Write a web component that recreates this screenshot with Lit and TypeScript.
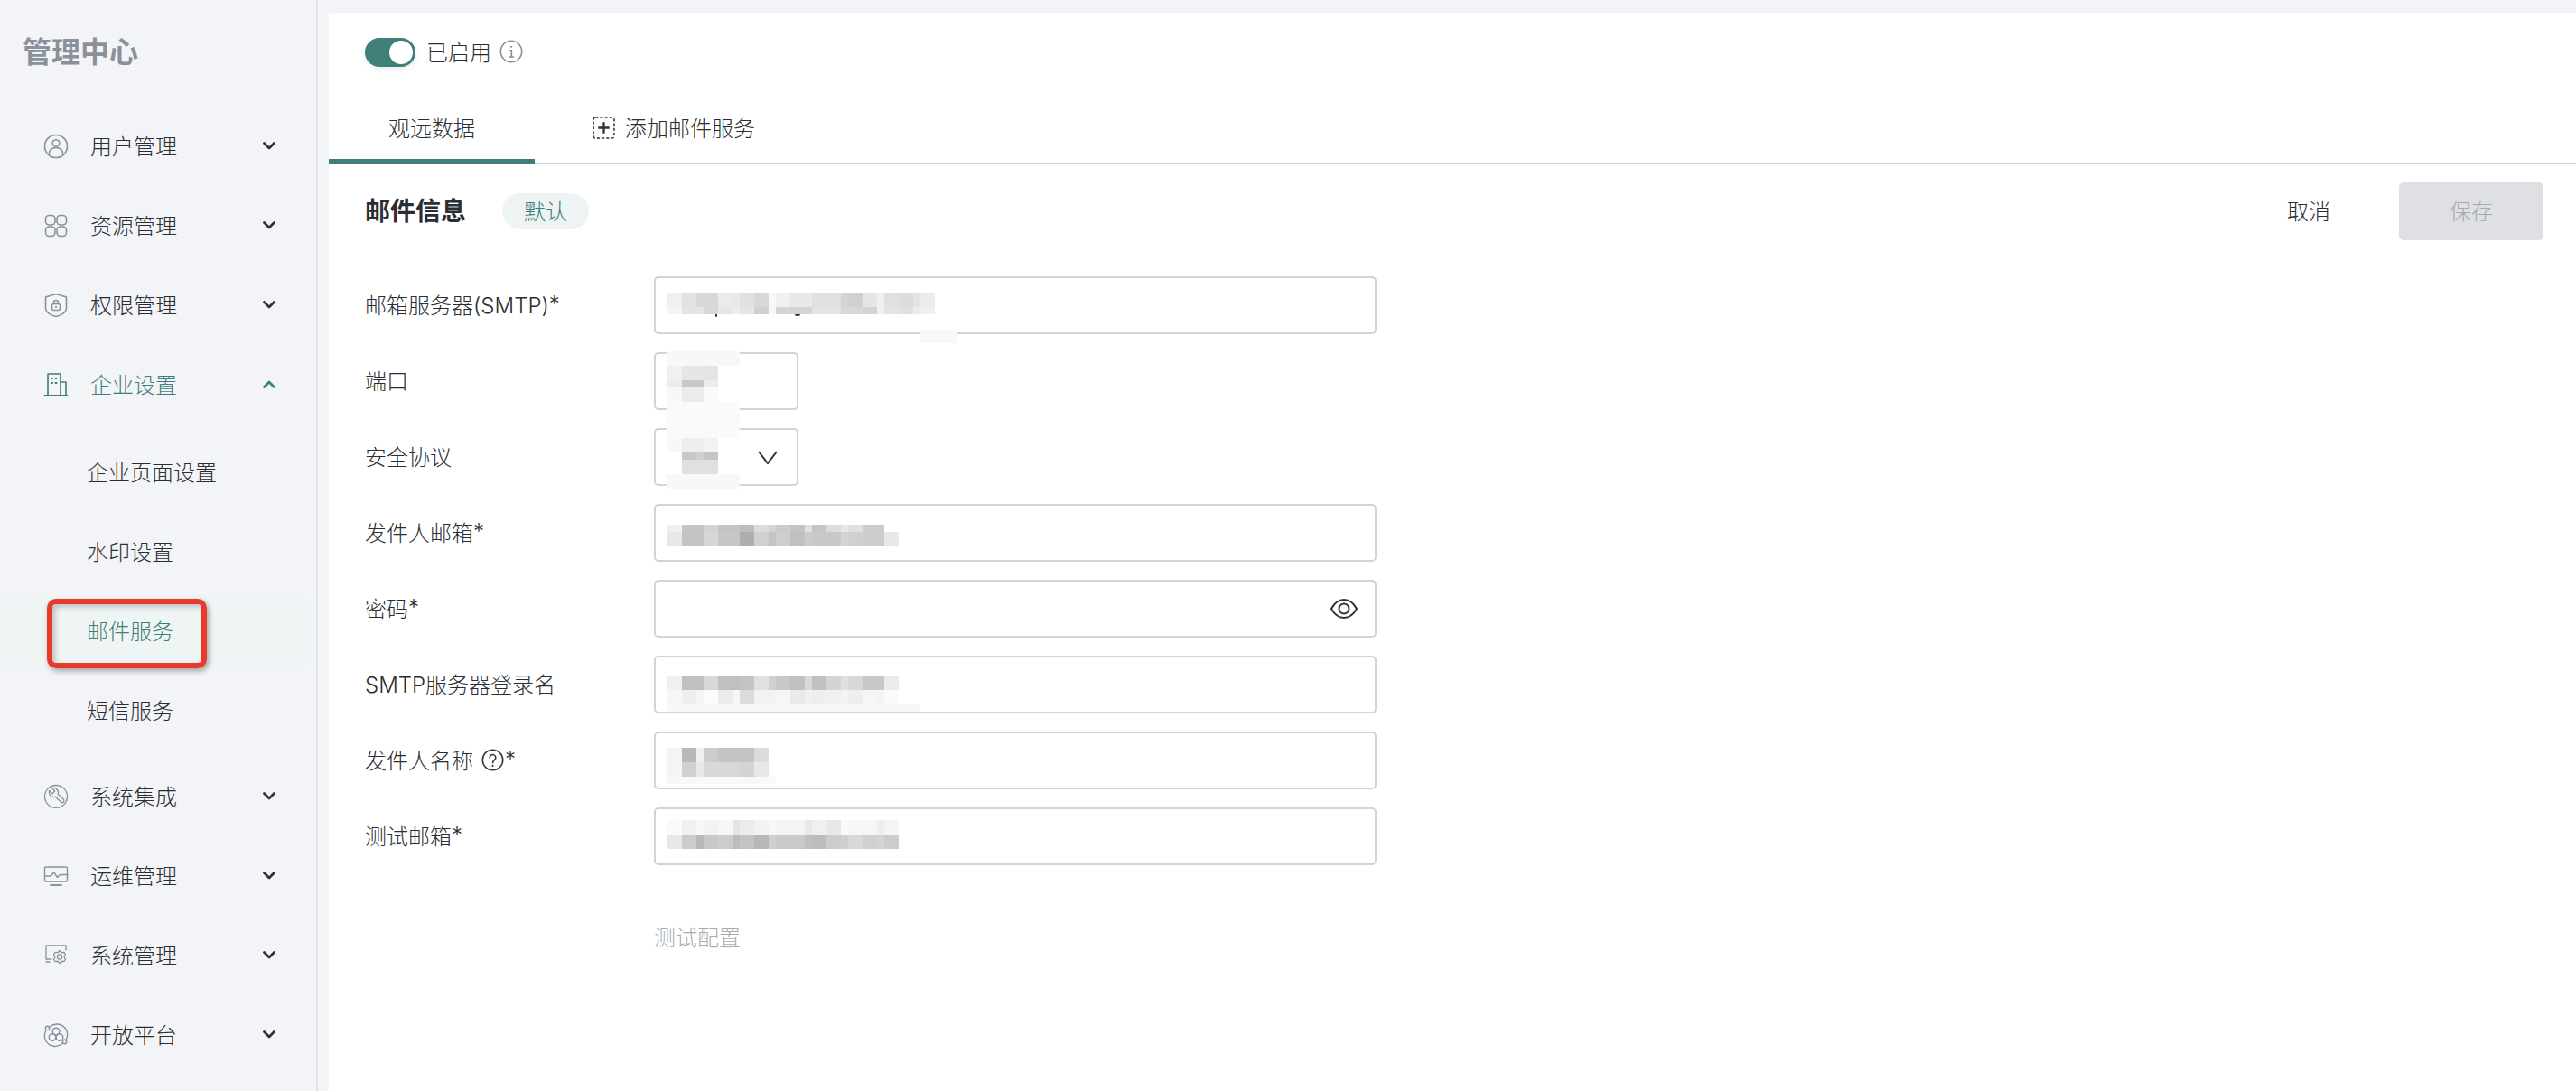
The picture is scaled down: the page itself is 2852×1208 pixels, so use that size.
import { LitElement, html, css, svg } from "lit";
import { customElement, property } from "lit/decorators.js";

type MosaicRow = [number, string];
interface Patch { left: number; top: number; rows: MosaicRow[]; ticks?: [number, number, number, number][]; }

@customElement("blur-mosaic")
class BlurMosaic extends LitElement {
  @property({ attribute: false }) patch!: Patch;
  static styles = css`
    :host { display: block; position: absolute; z-index: 1; pointer-events: none; }
    .grid { filter: blur(0.7px); }
    .row { display: flex; }
    .cell { flex: none; }
    .tick { position: absolute; background: #2f3338; border-radius: 0 0 4px 4px; }
  `;
  private cells(spec: string) {
    return spec.split(" ").map((part) => {
      const [g, n] = part.split("*");
      const width = Number(n ?? 1) * 8;
      const bg = g === "00" ? "transparent" : `#${g}${g}${g}`;
      return html`<div class="cell" style="width:${width}px;background:${bg}"></div>`;
    });
  }
  render() {
    return html`<div class="grid">${this.patch.rows.map(
      ([h, spec]) => html`<div class="row" style="height:${h}px">${this.cells(spec)}</div>`
    )}</div>${(this.patch.ticks ?? []).map(
      ([x, y, w, h]) => html`<div class="tick" style="left:${x}px;top:${y}px;width:${w}px;height:${h}px"></div>`
    )}`;
  }
}

const ic = (body: unknown, color = "#8b919b", width = 1.6) => html`<svg class="ic" viewBox="0 0 28 28" fill="none" stroke=${color} stroke-width=${width} stroke-linecap="round" stroke-linejoin="round">${body}</svg>`;

const ICONS: Record<string, unknown> = {
  user: ic(svg`<circle cx="14" cy="14" r="12.5"/><circle cx="14" cy="10.5" r="3.8"/><path d="M6 23c.6-4.800 3.600-7.500 8-7.500s7.400 2.700 8 7.500"/>`),
  res: ic(svg`<rect x="2.500" y="2.500" width="10.500" height="10.500" rx="4"/><rect x="15" y="2.500" width="10.500" height="10.500" rx="4"/><rect x="2.500" y="15" width="10.500" height="10.500" rx="4"/><rect x="15" y="15" width="10.500" height="10.500" rx="4"/>`),
  shield: ic(svg`<path d="M14 1.500l11.500 3.500v12c0 5-5.500 8-11.500 9.500-6-1.500-11.500-4.500-11.500-9.500V5z"/><rect x="9.500" y="12.500" width="9" height="7" rx="2"/><path d="M11.500 12.500v-1.500a2.500 2.500 0 0 1 5 0v1.500"/><path d="M14 15.500v1"/>`),
  building: ic(svg`<path d="M5 25V2h14v23"/><path d="M19 11h6v14"/><path d="M1.500 26h25" stroke-width="2"/><path d="M9 7h1M13.500 7h1M9 12h1M13.500 12h1" stroke-width="2"/>`, "#3f7f7a"),
  wrench: ic(svg`<circle cx="14" cy="14" r="12.500"/><path d="M6.500 7.500l3.500 3.200 2.700-2.700-3.200-3.500c3.500-.8 7 1.500 7 5 0 .8-.1 1.300-.3 1.800l5.800 5.500c1.200 1.200 1.200 2.500.4 3.300s-2.100.8-3.200-.3l-5.800-5.600c-.6.2-1.300.3-2 .3-3.500-.1-5.700-3.500-4.900-7z"/>`, "#8b919b", 1.3),
  monitor: ic(svg`<rect x="1.500" y="4" width="25" height="16" rx="1"/><path d="M1.500 14h7l3-4.500 4 6 3-3h8.500"/><path d="M8 24h12" stroke-width="1.800"/>`, "#8b919b", 1.4),
  gear: ic(svg`<path d="M25 8V3H3v15h6"/><path d="M3 21h4"/><path d="M18 8.500l2 2.200 3-.2 1.500 2.500-1.500 2.500 1.500 2.500-1.500 2.500-3-.2-2 2.200-2-2.200-3 .2-1.500-2.500 1.500-2.500-1.500-2.500 1.500-2.500 3 .2z"/><circle cx="18" cy="15.500" r="2.600"/>`, "#8b919b", 1.3),
  open: ic(svg`<path d="M7 5c3-2.500 6-3.300 9-3 4 .5 8 3 10 7.500 1 3 .8 6-.5 9"/><path d="M21 23.500c-3 2.500-6 3.300-9 3-4-.5-8-3-10-7.500-1-3-.8-6 .5-9"/><circle cx="4.500" cy="6.500" r="2.200"/><circle cx="23.500" cy="21.500" r="2.200"/><circle cx="14" cy="10" r="3.800"/><circle cx="10" cy="16.500" r="3.800"/><circle cx="18" cy="16.500" r="3.800"/>`, "#8b919b", 1.4),
};

const chevron = (up: boolean) => html`<svg class="chev" viewBox="0 0 14 9" fill="none" stroke=${up ? "#3f7f7a" : "#2f3338"} stroke-width="2.800" stroke-linecap="round" stroke-linejoin="round"><path d=${up ? "M1.500 7.500L7 2l5.500 5.500" : "M1.500 1.500L7 7l5.500-5.500"}/></svg>`;

const TOP_MENU = [
  { icon: "user", label: "用户管理" },
  { icon: "res", label: "资源管理" },
  { icon: "shield", label: "权限管理" },
];
const SUB_MENU = ["企业页面设置", "水印设置", "邮件服务", "短信服务"];
const BOTTOM_MENU = [
  { icon: "wrench", label: "系统集成" },
  { icon: "monitor", label: "运维管理" },
  { icon: "gear", label: "系统管理" },
  { icon: "open", label: "开放平台" },
];

interface Field { label: string; star?: boolean; help?: boolean; short?: boolean; select?: boolean; eye?: boolean; patches: Patch[]; }

const FIELDS: Field[] = [
  { label: "邮箱服务器(SMTP)", star: true, patches: [
    { left: 15, top: 18, rows: [
      [16, "f0*2 e2*2 d8*3 ec*2 e8 e0*2 d8*2 f8 f0*2 e8*3 e0*4 d4 d0*2 e6*2 f0 e0*2 dc*2 e4 ec*2"],
      [8, "f4*2 e4*3 d8*2 e6*2 ee e6*2 d0*2 f8 d4*5 e4*4 d8*3 d4*2 f0 e4*2 e0*2 ec f0*2"],
    ], ticks: [[53, 24, 2, 3], [141, 24, 6, 2]] },
    { left: 295, top: 59, rows: [[15, "f8*5"]] },
  ] },
  { label: "端口", short: true, patches: [
    { left: 15, top: -1, rows: [
      [16, "f8*10"],
      [16, "f0*2 e6*3 e4*2"],
      [8, "ec*2 c8*3 ec*2"],
      [16, "f8*2 ec*3 fa*2"],
      [20, "fa*10"],
    ] },
  ] },
  { label: "安全协议", short: true, select: true, patches: [
    { left: 15, top: -9, rows: [
      [20, "fa*10"],
      [16, "f8*2 ee*3 f2*2"],
      [8, "00*2 c8*2 d0 c4*2"],
      [16, "00*2 e0*5"],
      [16, "f8*10"],
    ] },
  ] },
  { label: "发件人邮箱", star: true, patches: [
    { left: 15, top: 23, rows: [
      [8, "f0*2 c4*3 d4*2 c4*3 be*2 dc*2 d4 cc*2 c4*2 e0 c6*2 dc*2 e8 e0*2 cc*3"],
      [16, "e8*2 c4*3 d6*2 c6*3 ae*2 d0*2 c4 ce*2 c0*2 cc c8*4 d4 d0*2 cc*3 e8*2"],
    ] },
  ] },
  { label: "密码", star: true, eye: true, patches: [] },
  { label: "SMTP服务器登录名", patches: [
    { left: 15, top: 22, rows: [
      [16, "f0*2 c0*3 d8*2 c0*3 c4*2 e0*2 d0 c8*2 c0*2 d8 c0*2 d4*2 e0 d8*2 c8*3 ec*2"],
      [16, "f6*2 ee*2 f4 fc*2 ec*2 f6 dc*2 f2*3 f6*2 ea*2 f0 ee*2 f0*2 f2 ee*2 f6*2 f4 fa*2"],
      [8, "f8*35"],
    ] },
  ] },
  { label: "发件人名称", star: true, help: true, patches: [
    { left: 15, top: 18, rows: [
      [16, "f4*2 b8*2 f0 cc*2 c4*3 c4*2 dc*2"],
      [16, "f4*2 d0*2 e8 d8*2 d8*3 d4*2 e8*2"],
      [8, "f8*15"],
    ] },
  ] },
  { label: "测试邮箱", star: true, patches: [
    { left: 15, top: 14, rows: [
      [16, "fa*2 f0*2 f8 f2*2 f6*2 e4 ec*2 f2*2 f8 f4*4 e8 f0*2 e8*2 fa f6*4 ee f4*2"],
      [16, "e8*2 cc*2 b8 c8*2 cc*2 bc c4*2 b8*2 d0 ca*4 c0 bc*2 cc*2 d0 d8*2 d0*2 d4 cc*2"],
    ] },
  ] },
];

@customElement("app-root")
export class AppRoot extends LitElement {
  static styles = css`
    :host { display: block; font-family: Inter, "Noto Sans CJK SC", "Noto Sans", sans-serif; }
    * { box-sizing: border-box; }
    .app { display: flex; width: 2852px; height: 1208px; overflow: hidden; background: #f2f4f8; color: #2a2e33; font-size: 24px; font-weight: 300; }
    .t { margin-bottom: 3px; }
    .side { flex: none; width: 352px; border-right: 2px solid #e2e4ea; }
    .brand { height: 112px; margin-bottom: 6px; padding-left: 25px; display: flex; align-items: center; font-size: 32px; font-weight: 700; color: #8b919b; }
    .item { height: 88px; display: flex; align-items: center; padding: 0 45px 0 48px; }
    .item.on { color: #3f7f7a; }
    .ic { flex: none; width: 28px; height: 28px; margin-right: 24px; }
    .chev { flex: none; width: 14px; height: 9px; margin-left: auto; margin-bottom: 2px; }
    .subs { padding: 15px 0 11px; display: flex; flex-direction: column; gap: 10px; }
    .sub { position: relative; width: 342px; height: 78px; padding-left: 96px; display: flex; align-items: center; }
    .sub .t { margin-bottom: 6px; }
    .sub.on { color: #3f7f7a; background: #eff4f4; }
    .mark { position: absolute; left: 52px; top: 2px; width: 177px; height: 77px; border: 6px solid #e8392a; border-radius: 10px; box-shadow: 2px 3px 6px rgba(0,0,0,.35), inset 3px 3px 6px rgba(0,0,0,.22); }
    .main { flex: 1; margin: 14px 0 0 12px; background: #fff; }
    .toggle-row { height: 88px; padding-left: 40px; display: flex; align-items: center; }
    .toggle { width: 56px; height: 32px; border-radius: 16px; background: #3f7f7a; display: flex; align-items: center; justify-content: flex-end; padding-right: 3px; box-shadow: 0 3px 6px rgba(0,0,0,.08); }
    .knob { width: 26px; height: 26px; border-radius: 50%; background: #fff; }
    .toggle-text { margin-left: 12px; }
    .info { width: 26px; height: 26px; margin-left: 9px; margin-bottom: 2px; }
    .tabs { height: 80px; display: flex; box-shadow: inset 0 -2px 0 #cfd3da; }
    .tab { height: 80px; display: flex; align-items: center; }
    .tab.on { width: 228px; justify-content: center; box-shadow: inset 0 -6px 0 #3f7f7a; }
    .tab.add { margin-left: 64px; }
    .tab svg { width: 25px; height: 25px; margin-right: 11px; margin-bottom: 2px; }
    .head { margin-top: 20px; height: 64px; padding: 0 36px 0 40px; display: flex; align-items: center; }
    h2 { margin: 0; font-size: 28px; font-weight: 700; line-height: 1; }
    .pill { margin-left: 40px; width: 96px; height: 40px; border-radius: 20px; background: #eef4f4; color: #3f7f7a; display: flex; align-items: center; justify-content: center; }
    .cancel { margin-left: auto; }
    .save { margin-left: 76px; width: 160px; height: 64px; border-radius: 5px; background: #dee0e4; color: #a6aab0; display: flex; align-items: center; justify-content: center; }
    .form { margin-top: 40px; padding-left: 40px; display: flex; flex-direction: column; gap: 20px; }
    .field { display: flex; align-items: center; height: 64px; }
    .label { flex: none; width: 320px; display: flex; align-items: center; white-space: nowrap; }
    .label svg { width: 25px; height: 25px; margin: 0 1px 2px 9px; }
    .control { position: relative; width: 800px; height: 64px; }
    .control.short { width: 160px; }
    .box { height: 64px; border: 2px solid #cfd3da; border-radius: 5px; background: #fff; display: flex; align-items: center; justify-content: flex-end; }
    .eye { width: 32px; height: 24px; margin-right: 18px; }
    .down { width: 22px; height: 15px; margin-right: 21px; }
    .test { margin: 63px 0 0 360px; height: 34px; display: flex; align-items: center; color: #a8acb2; }
  `;

  private topItem(it: { icon: string; label: string }) {
    return html`<div class="item">${ICONS[it.icon]}<span class="t">${it.label}</span>${chevron(false)}</div>`;
  }

  private field(f: Field) {
    return html`<div class="field">
      <div class="label">
        <span class="t">${f.label}</span>
        ${f.help
          ? html`<svg viewBox="0 0 24 24" fill="none" stroke="#34383d" stroke-width="1.500" stroke-linecap="round"><circle cx="12" cy="12" r="10.800"/><path d="M8.800 9.500a3.200 3.200 0 1 1 5 2.600c-1.100.8-1.800 1.400-1.800 2.900"/><path d="M12 18v.2" stroke-width="2"/></svg>`
          : ""}
        ${f.star ? html`<span class="t">*</span>` : ""}
      </div>
      <div class="control ${f.short ? "short" : ""}">
        <div class="box">
          ${f.eye
            ? html`<svg class="eye" viewBox="0 0 32 24" fill="none" stroke="#2f3338" stroke-width="2"><path d="M2 12C5.500 5.500 10 2 16 2s10.500 3.500 14 10c-3.500 6.500-8 10-14 10S5.500 18.500 2 12z"/><circle cx="16" cy="12" r="5.500"/></svg>`
            : ""}
          ${f.select
            ? html`<svg class="down" viewBox="0 0 22 15" fill="none" stroke="#2f3338" stroke-width="2"><path d="M1 1l10 13L21 1"/></svg>`
            : ""}
        </div>
        ${f.patches.map(
          (p) => html`<blur-mosaic .patch=${p} style="left:${p.left}px;top:${p.top}px"></blur-mosaic>`
        )}
      </div>
    </div>`;
  }

  render() {
    return html`<div class="app">
      <aside class="side">
        <div class="brand"><span class="t">管理中心</span></div>
        ${TOP_MENU.map((it) => this.topItem(it))}
        <div class="item on">${ICONS.building}<span class="t">企业设置</span>${chevron(true)}</div>
        <div class="subs">
          ${SUB_MENU.map(
            (s, i) => html`<div class="sub ${i === 2 ? "on" : ""}"><span class="t">${s}</span>${i === 2 ? html`<div class="mark"></div>` : ""}</div>`
          )}
        </div>
        ${BOTTOM_MENU.map((it) => this.topItem(it))}
      </aside>
      <main class="main">
        <div class="toggle-row">
          <div class="toggle"><div class="knob"></div></div>
          <span class="toggle-text t">已启用</span>
          <svg class="info" viewBox="0 0 24 24" fill="none" stroke="#8b919b" stroke-width="1.500"><circle cx="12" cy="12" r="10.800"/><path d="M12 6.500v1.500" stroke-width="2"/><path d="M9.800 11H12.300v6.500M9.500 17.500h5.500"/></svg>
        </div>
        <div class="tabs">
          <div class="tab on"><span class="t">观远数据</span></div>
          <div class="tab add">
            <svg viewBox="0 0 24 24" fill="none" stroke="#2f3338"><rect x="1" y="1" width="22" height="22" rx="2" stroke-width="1.500" stroke-dasharray="3 2"/><path d="M6 12h12M12 6v12" stroke-width="2.200"/></svg>
            <span class="t">添加邮件服务</span>
          </div>
        </div>
        <div class="head">
          <h2>邮件信息</h2>
          <div class="pill"><span class="t">默认</span></div>
          <div class="cancel t">取消</div>
          <div class="save"><span class="t">保存</span></div>
        </div>
        <div class="form">${FIELDS.map((f) => this.field(f))}</div>
        <div class="test"><span class="t">测试配置</span></div>
      </main>
    </div>`;
  }
}

void BlurMosaic;
